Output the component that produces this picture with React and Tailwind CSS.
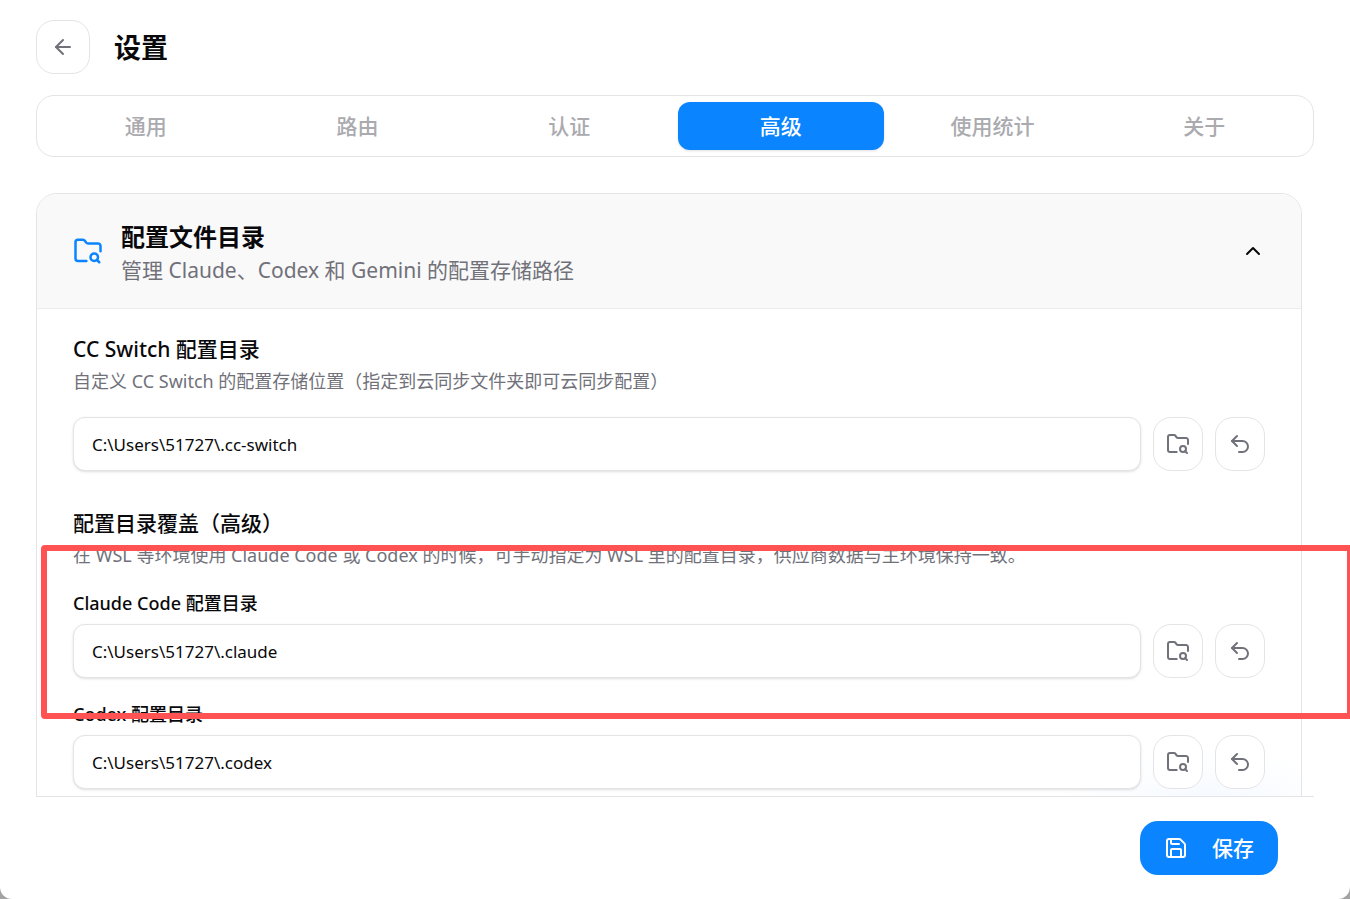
import { useState } from 'react';
import { ArrowLeft, ChevronUp, FolderSearch, Save, Undo2 } from 'lucide-react';

const TABS = ['通用', '路由', '认证', '高级', '使用统计', '关于'];

const IconButton = ({ label, children }) => (
  <button
    type="button"
    aria-label={label}
    className="flex h-[54px] w-[50px] shrink-0 items-center justify-center rounded-[18px] border border-[#e4e4e7] bg-white text-[#71717a]"
  >
    {children}
  </button>
);

const DirectoryRow = ({ id, label, value, onChange }) => (
  <div className="flex gap-3">
    <input
      id={id}
      type="text"
      aria-label={label}
      value={value}
      onChange={(e) => onChange(e.target.value)}
      className="h-[54px] min-w-0 flex-1 rounded-xl border border-[#e4e4e7] bg-white px-[18px] text-[17px] text-[#09090b] shadow-sm outline-none"
    />
    <IconButton label="浏览目录">
      <FolderSearch size={24} />
    </IconButton>
    <IconButton label="恢复默认">
      <Undo2 size={24} />
    </IconButton>
  </div>
);

const SectionTitle = ({ title, description }) => (
  <header>
    <h3 className="text-[21px] leading-8 font-medium">{title}</h3>
    <p className="mt-[3px] text-lg leading-[27px] text-[#71717a]">{description}</p>
  </header>
);

const App = () => {
  const [tab, setTab] = useState('高级');
  const [dirs, setDirs] = useState({
    app: 'C:\\Users\\51727\\.cc-switch',
    claude: 'C:\\Users\\51727\\.claude',
    codex: 'C:\\Users\\51727\\.codex',
  });

  const update = (key) => (value) => setDirs({ ...dirs, [key]: value });

  return (
    <div className="h-screen bg-[#a3a3a3] font-['Noto_Sans','Noto_Sans_CJK_SC',sans-serif] text-[#09090b]">
      <div className="relative flex h-full flex-col overflow-hidden rounded-b-xl bg-white px-9 pt-5">
        <div className="flex items-center gap-6">
          <button
            type="button"
            aria-label="返回"
            className="flex size-[54px] items-center justify-center rounded-[18px] border border-[#e4e4e7] text-[#71717a]"
          >
            <ArrowLeft size={24} />
          </button>
          <h1 className="pt-0.5 text-[27px] leading-9 font-semibold">设置</h1>
        </div>

        <div role="tablist" className="mt-[21px] grid grid-cols-6 gap-1.5 rounded-[18px] border border-[#e4e4e7] p-1.5">
          {TABS.map((t) => (
            <button
              key={t}
              type="button"
              role="tab"
              aria-selected={t === tab}
              onClick={() => setTab(t)}
              className={
                t === tab
                  ? 'h-12 rounded-xl bg-[#0a84ff] pt-0.5 text-[21px] font-medium text-white shadow-sm'
                  : 'h-12 rounded-xl pt-0.5 text-[21px] font-medium text-[#aaaaaf]'
              }
            >
              {t}
            </button>
          ))}
        </div>

        <main className="mt-9 min-h-0 flex-1 overflow-hidden pr-3">
          <section className="overflow-hidden rounded-t-[21px] border border-[#e4e4e7] bg-[radial-gradient(ellipse_150px_60px_at_1170px_615px,#f4f9ff,#ffffff)]">
            <button
              type="button"
              aria-expanded="true"
              className="flex w-full items-center border-b border-[#ececee] bg-[#f9f9f9] px-9 py-6 text-left"
            >
              <FolderSearch size={30} className="shrink-0 text-[#0a84ff]" />
              <span className="ml-[18px] flex-1">
                <span className="block text-2xl leading-[38px] font-semibold">配置文件目录</span>
                <span className="block text-[21px] leading-7 text-[#71717a]">
                  管理 Claude、Codex 和 Gemini 的配置存储路径
                </span>
              </span>
              <ChevronUp size={24} />
            </button>

            <div className="px-9 py-6">
              <SectionTitle
                title="CC Switch 配置目录"
                description="自定义 CC Switch 的配置存储位置（指定到云同步文件夹即可云同步配置）"
              />
              <div className="mt-[22px]">
                <DirectoryRow id="app-dir" label="CC Switch 配置目录" value={dirs.app} onChange={update('app')} />
              </div>

              <div className="mt-9">
                <SectionTitle
                  title="配置目录覆盖（高级）"
                  description="在 WSL 等环境使用 Claude Code 或 Codex 的时候，可手动指定为 WSL 里的配置目录，供应商数据与主环境保持一致。"
                />
              </div>

              <div className="mt-[21px] flex flex-col gap-[23px]">
                <div>
                  <label htmlFor="claude-dir" className="mb-[7px] block text-lg leading-[27px] font-medium">
                    Claude Code 配置目录
                  </label>
                  <DirectoryRow id="claude-dir" value={dirs.claude} onChange={update('claude')} />
                </div>
                <div>
                  <label htmlFor="codex-dir" className="mb-[7px] block text-lg leading-[27px] font-medium">
                    Codex 配置目录
                  </label>
                  <DirectoryRow id="codex-dir" value={dirs.codex} onChange={update('codex')} />
                </div>
              </div>
            </div>
          </section>
        </main>

        <footer className="flex justify-end border-t border-[#e4e4e7] bg-white px-9 py-6">
          <button
            type="button"
            className="flex h-[54px] items-center gap-6 rounded-[18px] bg-[#0a84ff] px-6 text-[21px] font-medium text-white"
          >
            <Save size={24} />
            <span className="pt-0.5">保存</span>
          </button>
        </footer>

        {/* highlight around the Claude Code directory */}
        <div className="pointer-events-none absolute top-[545px] -right-[3px] left-[41px] h-[174px] rounded-sm border-[6px] border-[#ff5252]" />
      </div>
    </div>
  );
};

export default App;
